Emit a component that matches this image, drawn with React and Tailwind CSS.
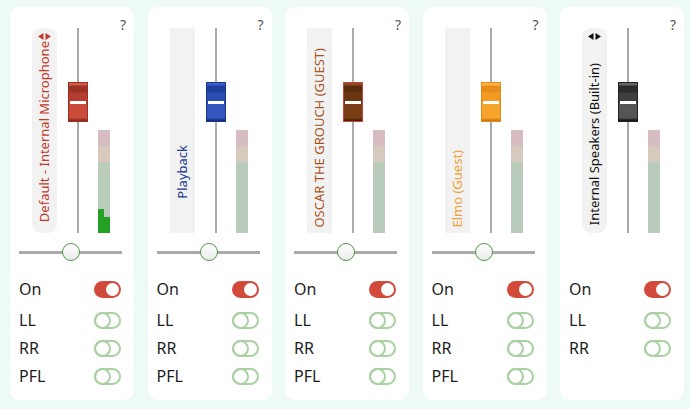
import React from 'react';

const channels = [
  {
    name: 'Default - Internal Microphone',
    text: 'text-[#c0392b]',
    arrow: '#c0392b',
    rounded: true,
    pb: 'pb-[11px]',
    knob: 'border-[#9a2f22] bg-[linear-gradient(to_bottom,#d45a48_0px,#d45a48_2px,#9c3226_3px,#9c3226_9px,#b33d2e_10px,#b33d2e_19px,#c94b3a_22px,#c94b3a_35px,#8c2b1e_37px)]',
    level: true,
    pan: true,
    pfl: true,
  },
  {
    name: 'Playback',
    text: 'text-[#1d3b8f]',
    rounded: false,
    pb: 'pb-[34px]',
    knob: 'border-[#1a3688] bg-[linear-gradient(to_bottom,#3a5fc8_0px,#3a5fc8_2px,#203f9c_3px,#203f9c_9px,#2a4cb0_10px,#2a4cb0_19px,#3556be_22px,#3556be_35px,#172f7c_37px)]',
    pan: true,
    pfl: true,
  },
  {
    name: 'OSCAR THE GROUCH (GUEST)',
    text: 'text-[#a9521b]',
    rounded: false,
    pb: 'pb-[5px]',
    knob: 'border-[#c8433a] bg-[linear-gradient(to_bottom,#8a4a22_0px,#8a4a22_2px,#5a2c0e_3px,#5a2c0e_9px,#6a3612_10px,#6a3612_19px,#7a3e16_22px,#7a3e16_35px,#4a220a_37px)]',
    pan: true,
    pfl: true,
  },
  {
    name: 'Elmo (Guest)',
    text: 'text-[#f0a035]',
    rounded: false,
    pb: 'pb-[5px]',
    knob: 'border-[#e08a1a] bg-[linear-gradient(to_bottom,#ffb545_0px,#ffb545_2px,#e88c1c_3px,#e88c1c_9px,#f39a22_10px,#f39a22_19px,#f7a52c_22px,#f7a52c_35px,#d07a10_37px)]',
    pan: true,
    pfl: true,
  },
  {
    name: 'Internal Speakers (Built-in)',
    text: 'text-[#111]',
    arrow: '#111',
    rounded: true,
    pb: 'pb-[8px]',
    knob: 'border-[#222] bg-[linear-gradient(to_bottom,#666_0px,#666_2px,#2a2a2a_3px,#2a2a2a_9px,#3e3e3e_10px,#3e3e3e_19px,#555_22px,#555_35px,#1a1a1a_37px)]',
    pan: false,
    pfl: false,
  },
];

function Arrows({ color }) {
  return (
    <svg width="13" height="7" viewBox="0 0 13 7" className="mt-[5px] shrink-0">
      <path d="M0 3.5 L5.5 0 L5.5 7 Z" fill={color} />
      <path d="M13 3.5 L7.5 0 L7.5 7 Z" fill={color} />
    </svg>
  );
}

function Toggle({ on }) {
  if (on) {
    return (
      <div className="w-[27px] h-[17px] rounded-full bg-[#d24b3a] flex items-center justify-end pr-[2px]">
        <div className="w-[13px] h-[13px] rounded-full bg-white" />
      </div>
    );
  }
  return (
    <div className="w-[27px] h-[17px] rounded-full border-2 border-[#a9d1a2] flex items-center">
      <div className="w-[17px] h-[17px] -ml-[2px] rounded-full border-2 border-[#a9d1a2]" />
    </div>
  );
}

function Channel({ ch }) {
  const rows = ch.pfl ? ['On', 'LL', 'RR', 'PFL'] : ['On', 'LL', 'RR'];
  return (
    <div className="w-[124px] h-[393px] shrink-0 bg-white rounded-[10px] relative flex flex-col">
      <span className="absolute top-[7px] right-[8px] text-[14px] text-[#555]">?</span>

      <div className="flex items-start pt-[21px] h-[226px]">
        {/* name */}
        <div
          className={`ml-[22px] w-[25px] h-[205px] bg-[#f2f2f2] flex flex-col items-center ${ch.rounded ? 'rounded-[9px]' : ''} ${ch.pb}`}
        >
          {ch.arrow && <Arrows color={ch.arrow} />}
          <div className="flex-1" />
          <span className={`[writing-mode:vertical-rl] rotate-180 whitespace-nowrap text-[13px] leading-[25px] ${ch.text}`}>
            {ch.name}
          </span>
        </div>

        {/* fader */}
        <div className="ml-[11px] w-[20px] h-[205px] relative flex justify-center">
          <div className="w-[2px] h-full bg-[#aaa]" />
          <div className={`absolute top-[54px] left-0 w-[20px] h-[40px] border flex items-center justify-center ${ch.knob}`}>
            <div className="w-[16px] h-[3px] bg-white" />
          </div>
        </div>

        {/* meter */}
        <div className="ml-[10px] mt-[102px] w-[12px] h-[103px] flex flex-col relative">
          <div className="h-[16px] bg-[#d7bdc1]" />
          <div className="h-[16px] bg-[#d8c9bf]" />
          <div className="flex-1 bg-[#b9cbbb]" />
          {ch.level && (
            <div className="absolute bottom-0 left-0 right-0 h-[24px] flex items-end">
              <div className="w-[6px] h-[24px] bg-[#24a024]" />
              <div className="w-[6px] h-[16px] bg-[#24a024]" />
            </div>
          )}
        </div>
      </div>

      {/* pan */}
      <div className="mt-[9px] h-[20px] mx-[9px] w-[103px] flex items-center relative">
        {ch.pan && (
          <>
            <div className="w-full h-[3px] bg-[#aaa]" />
            <div className="absolute left-[43px] top-[1px] w-[18px] h-[18px] rounded-full border-[1.5px] border-[#4d9a42] bg-[linear-gradient(to_bottom,#fff,#ececec)]" />
          </>
        )}
      </div>

      {/* switches */}
      <div className="mt-[13px] flex flex-col">
        {rows.map((r, i) => (
          <div key={r} className={`h-[28px] flex items-center justify-between pl-[9px] pr-[13px] ${i === 1 ? 'mt-[3px]' : ''}`}>
            <span className="text-[16px] text-[#1e1e1e]">{r}</span>
            <Toggle on={r === 'On'} />
          </div>
        ))}
      </div>
    </div>
  );
}

export default function App() {
  return (
    <div className="w-[690px] h-[409px] bg-[#eefaf5] flex gap-[13.5px] pl-[10px] pt-[7px] font-['Noto_Sans',sans-serif] overflow-hidden">
      {channels.map((ch) => (
        <Channel key={ch.name} ch={ch} />
      ))}
    </div>
  );
}
